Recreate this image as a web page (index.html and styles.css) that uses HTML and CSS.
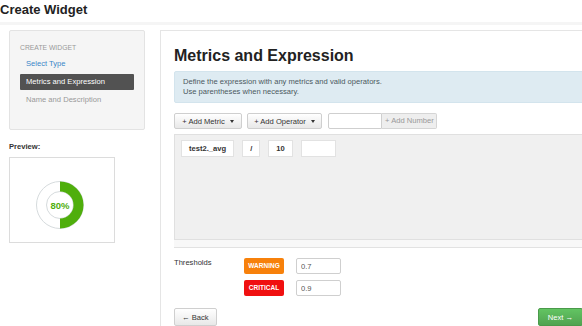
FILE: index.html
```html
<!DOCTYPE html>
<html lang="en">
<head>
  <meta charset="UTF-8">
  <meta name="viewport" content="width=device-width, initial-scale=1.0">
  <title>Create Widget</title>
  <link rel="stylesheet" href="styles.css">
</head>
<body>
  <header class="page-title">Create Widget</header>
  <div class="title-rule"></div>

  <div class="layout">
    <aside class="side">
      <div class="steps">
        <div class="steps-head">CREATE WIDGET</div>
        <a class="step step-link" href="#">Select Type</a>
        <div class="step step-active">Metrics and Expression</div>
        <div class="step step-todo">Name and Description</div>
      </div>

      <div class="preview-label">Preview:</div>
      <div class="preview">
        <svg class="donut" width="48" height="48" viewBox="0 0 48 48">
          <circle cx="24" cy="24" r="23.5" fill="#fff" stroke="#d6dbdd" stroke-width="1"/>
          <circle cx="24" cy="24" r="13.5" fill="#fff" stroke="#d6dbdd" stroke-width="1"/>
          <path d="M24 0.5 A23.5 23.5 0 0 1 24 47.5 L24 37.5 A13.5 13.5 0 0 0 24 10.5 Z" fill="#4fae0c"/>
          <text x="24" y="27.5" text-anchor="middle" class="donut-text">80%</text>
        </svg>
      </div>
    </aside>

    <main class="panel">
      <h1>Metrics and Expression</h1>

      <div class="alert">
        Define the expression with any metrics and valid operators.<br>
        Use parentheses when necessary.
      </div>

      <div class="toolbar">
        <button class="btn btn-metric">+ Add Metric <span class="caret"></span></button>
        <button class="btn btn-operator">+ Add Operator <span class="caret"></span></button>
        <div class="number-group">
          <input type="text" class="number-input">
          <span class="addon">+ Add Number</span>
        </div>
      </div>

      <div class="expr-wrap">
        <div class="expr">
          <span class="token">test2._avg</span>
          <span class="token">/</span>
          <span class="token">10</span>
          <span class="token token-empty"></span>
        </div>
      </div>

      <div class="thresholds">
        <div class="thresholds-label">Thresholds</div>
        <div class="thresholds-rows">
          <div class="threshold-row">
            <span class="badge badge-warning">WARNING</span>
            <input type="text" class="threshold-input" value="0.7">
          </div>
          <div class="threshold-row">
            <span class="badge badge-critical">CRITICAL</span>
            <input type="text" class="threshold-input" value="0.9">
          </div>
        </div>
      </div>

      <div class="footer">
        <button class="btn btn-back">&larr; Back</button>
        <button class="btn btn-next">Next &rarr;</button>
      </div>
    </main>
  </div>
</body>
</html>
```

FILE: styles.css
```css
/* Global */
body {
  margin: 0;
  width: 582px;
  height: 326px;
  overflow: hidden;
  background: #fff;
  color: #333;
  font-family: "Liberation Sans", Arial, sans-serif;
  font-size: 7.6px;
  line-height: 10px;
}

.page-title {
  padding: 2px 0 5px;
  font-size: 13px;
  line-height: 15px;
  font-weight: bold;
  color: #222;
}

.title-rule {
  height: 3px;
  background: #f5f5f5;
}

.layout {
  display: flex;
  align-items: flex-start;
  height: 296px;
  padding-top: 5px;
}

/* Sidebar */
.side {
  flex-shrink: 0;
  width: 136px;
  margin-left: 9px;
}

.steps {
  display: flex;
  flex-direction: column;
  padding: 12px 10px 19px;
  background: #f5f5f5;
  border: 1px solid #e3e3e3;
  border-radius: 2px;
}

.steps-head {
  margin-bottom: 3px;
  font-size: 6.8px;
  color: #999;
}

.step {
  height: 16px;
  line-height: 16px;
  padding-left: 6px;
  margin-bottom: 2px;
  border-radius: 1px;
}

.step-link {
  color: #3a87c8;
  text-decoration: none;
}

.step-active {
  background: #525252;
  color: #fff;
}

.step-todo {
  color: #999;
}

.preview-label {
  margin-top: 12px;
  font-weight: bold;
}

.preview {
  width: 104px;
  height: 84px;
  margin-top: 5px;
  border: 1px solid #dcdcdc;
  background: #fff;
}

.donut {
  display: block;
  margin: 23px 0 0 26px;
}

.donut-text {
  font-family: "Liberation Sans", Arial, sans-serif;
  font-size: 9.5px;
  font-weight: bold;
  fill: #4fae0c;
}

/* Main panel */
.panel {
  flex-shrink: 0;
  box-sizing: border-box;
  width: 436px;
  height: 296px;
  overflow: hidden;
  margin-left: 15px;
  padding: 15px 0 0 13px;
  border-top: 1px solid #e5e5e5;
  border-left: 1px solid #e5e5e5;
}

.panel h1 {
  margin: 0 0 5px;
  font-size: 16px;
  line-height: 20px;
  font-weight: bold;
  color: #222;
}

.alert {
  padding: 5px 8px;
  background: #deebf2;
  border: 1px solid #d3e4ed;
  border-radius: 2px;
  color: #4a5860;
}

.toolbar {
  display: flex;
  align-items: center;
  margin-top: 10px;
  height: 16px;
}

.btn {
  display: flex;
  align-items: center;
  justify-content: center;
  box-sizing: border-box;
  height: 16px;
  padding: 0 6px;
  border: 1px solid #cfcfcf;
  border-radius: 2px;
  background: linear-gradient(#ffffff, #e8e8e8);
  font-family: inherit;
  font-size: 7.6px;
  white-space: nowrap;
  color: #333;
  cursor: pointer;
}

.btn-metric {
  width: 68px;
}

.btn-operator {
  width: 75px;
  margin-left: 5px;
}

.caret {
  display: inline-block;
  margin-left: 5px;
  border-top: 3px solid #333;
  border-left: 2.5px solid transparent;
  border-right: 2.5px solid transparent;
}

.number-group {
  display: flex;
  margin-left: 6px;
  height: 16px;
}

.number-input {
  box-sizing: border-box;
  width: 54px;
  height: 16px;
  margin: 0;
  border: 1px solid #cfcfcf;
  border-radius: 2px 0 0 2px;
}

.addon {
  box-sizing: border-box;
  width: 55px;
  height: 16px;
  line-height: 14px;
  padding-left: 3px;
  background: #eee;
  border: 1px solid #d5d5d5;
  border-left: none;
  border-radius: 0 2px 2px 0;
  color: #999;
}

/* Expression builder */
.expr-wrap {
  margin-top: 5px;
  padding: 0 8px 7px 0;
  background: #f8f8f8;
  border-bottom: 1px solid #e2e2e2;
}

.expr {
  display: flex;
  align-items: flex-start;
  gap: 8px;
  height: 94px;
  padding: 5px 6px;
  background: #f0f0f0;
  border: 1px solid #e0e0e0;
}

.token {
  height: 15px;
  line-height: 15px;
  padding: 0 7px;
  background: #fff;
  border: 1px solid #e2e2e2;
  font-weight: bold;
  color: #333;
}

.token-empty {
  width: 19px;
}

/* Thresholds */
.thresholds {
  display: flex;
  margin-top: 10px;
}

.thresholds-label {
  width: 70px;
  color: #333;
}

.thresholds-rows {
  display: flex;
  flex-direction: column;
  gap: 6px;
}

.threshold-row {
  display: flex;
  align-items: center;
  gap: 12px;
}

.badge {
  width: 40px;
  height: 16px;
  line-height: 16px;
  text-align: center;
  border-radius: 2px;
  font-size: 6.5px;
  font-weight: bold;
  color: #fff;
}

.badge-warning {
  background: #f7810b;
}

.badge-critical {
  background: #f01010;
}

.threshold-input {
  box-sizing: border-box;
  width: 45px;
  height: 16px;
  margin: 0;
  padding: 0 4px;
  border: 1px solid #cfcfcf;
  border-radius: 2px;
  font-family: inherit;
  font-size: 7.6px;
  color: #555;
}

/* Footer */
.footer {
  display: flex;
  justify-content: space-between;
  width: 409px;
  margin-top: 12px;
}

.btn-back {
  height: 18px;
  padding: 0 7px;
}

.btn-next {
  height: 18px;
  padding: 0 9px;
  border-color: #4a9a4a;
  background: linear-gradient(#62c462, #51a351);
  color: #fff;
}
```
